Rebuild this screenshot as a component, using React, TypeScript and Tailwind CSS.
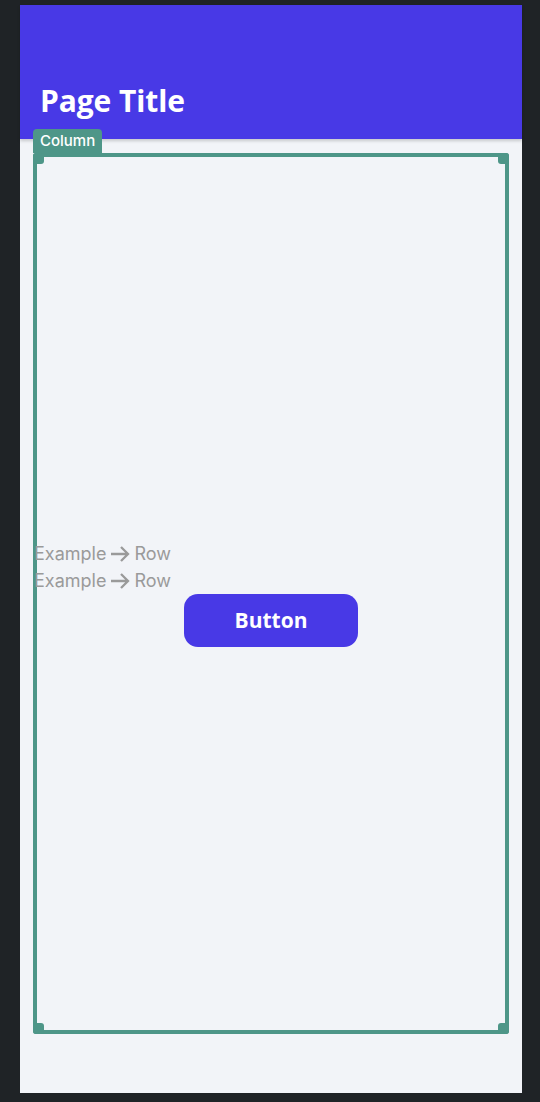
export default function App() {
  return (
    <div className="min-h-screen w-[540px] h-[1102px] bg-[#1f2326] pt-[5px] pl-[20px]">
      <div className="w-[502px] h-[1088px] bg-[#f2f4f8] flex flex-col">
        {/* Header */}
        <header className="relative z-10 h-[134px] bg-[#4839e6] shadow-[0_2px_3px_rgba(0,0,0,0.18)] flex items-end px-[20px] pb-[23px]">
          <h1 className="text-white text-[30px] leading-none font-bold tracking-[-0.1px] [font-family:'Open_Sans',sans-serif]">
            Page Title
          </h1>
        </header>

        {/* Column */}
        <div className="relative mx-[13px] mt-[14px] h-[881px] flex flex-col justify-center">
          {/* selection overlay */}
          <div className="absolute inset-0 border-[4px] border-[#4e9688] rounded-[3px] pointer-events-none" />
          <div className="absolute top-0 left-0 w-[11px] h-[11px] bg-[#4e9688] rounded-[3px]" />
          <div className="absolute top-0 right-0 w-[11px] h-[11px] bg-[#4e9688] rounded-[3px]" />
          <div className="absolute bottom-0 left-0 w-[11px] h-[11px] bg-[#4e9688] rounded-[3px]" />
          <div className="absolute bottom-0 right-0 w-[11px] h-[11px] bg-[#4e9688] rounded-[3px]" />
          <div className="absolute -top-[24px] left-0 z-20 h-[24px] px-[7px] bg-[#4e9688] rounded-t-[4px] text-white text-[15px] leading-[24px] font-medium [font-family:Inter,sans-serif]">
            Column
          </div>

          <div className="relative pl-[1px] flex flex-col [font-family:Inter,sans-serif] text-[18px] leading-[27px] text-[#9a9a9a]">
            {[0, 1].map((i) => (
              <div key={i} className="flex items-center">
                Example
                <svg className="mx-[4px]" width="20" height="18" viewBox="0 0 20 18" fill="none" stroke="#9a9a9a" strokeWidth="2.3">
                  <path d="M1 9h17M11 2l7 7-7 7" />
                </svg>
                Row
              </div>
            ))}
          </div>
          <button className="relative self-center w-[174px] h-[53px] rounded-[14px] bg-[#4839e6] text-white text-[21px] font-bold [font-family:'Open_Sans',sans-serif]">
            Button
          </button>
        </div>
      </div>
    </div>
  );
}
